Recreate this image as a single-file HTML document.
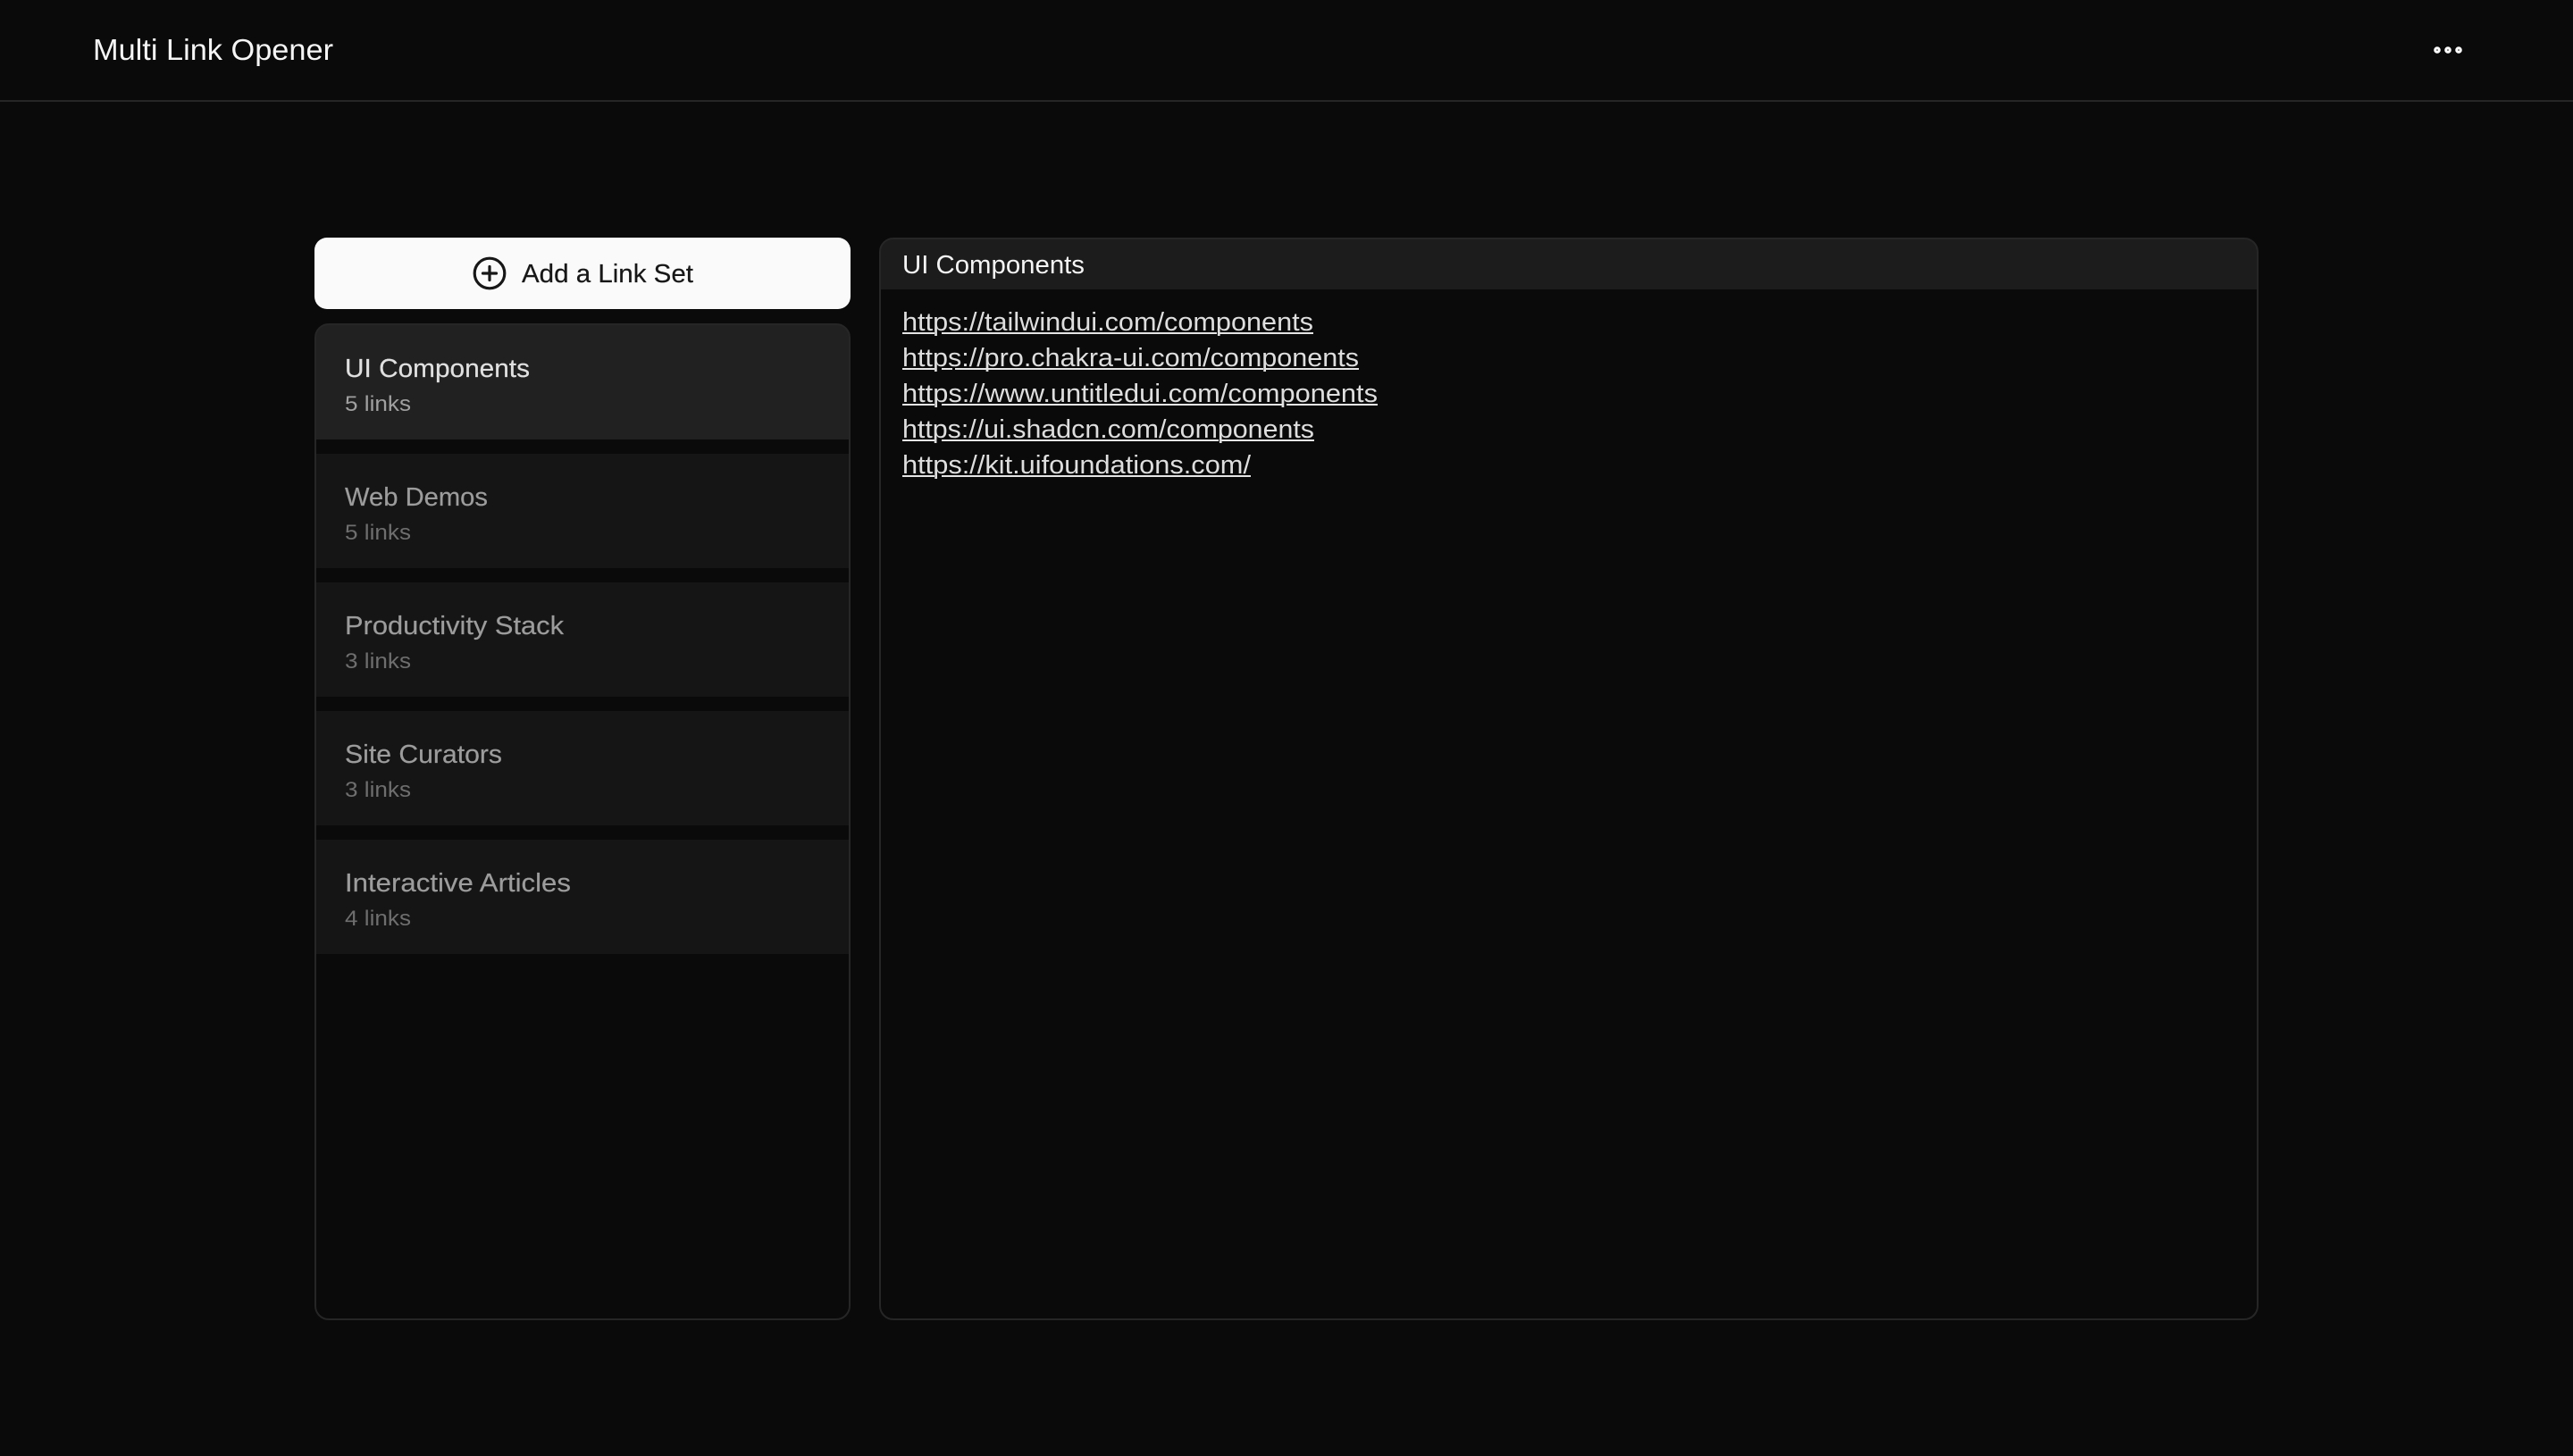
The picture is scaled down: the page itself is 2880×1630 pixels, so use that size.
<!DOCTYPE html>
<html lang="en">
<head>
<meta charset="utf-8">
<title>Multi Link Opener</title>
<style>
html,body{margin:0;padding:0;background:#0a0a0a;width:2880px;height:1630px;overflow:hidden}
svg{display:block}
text{font-family:"Liberation Sans",Arial,sans-serif;white-space:pre}
.t{font-size:29px}
.s{font-size:24.5px}
.m{stroke-width:.2px}
</style>
</head>
<body>
<svg xmlns="http://www.w3.org/2000/svg" width="2880" height="1630" viewBox="0 0 2880 1630">
<defs>
<clipPath id="l"><rect x="353" y="363" width="598" height="1114" rx="15"/></clipPath>
<clipPath id="r"><rect x="985" y="267" width="1542" height="1210" rx="15"/></clipPath>
</defs>
<rect width="2880" height="1630" fill="#0a0a0a"/>

<!-- header -->
<text x="104" y="67" font-size="33" fill="#f5f5f5" textLength="269" lengthAdjust="spacingAndGlyphs">Multi Link Opener</text>
<rect x="0" y="112" width="2880" height="2" fill="#262626"/>
<g fill="none" stroke="#fff" stroke-width="3"><circle cx="2728" cy="56" r="2.3"/><circle cx="2740" cy="56" r="2.3"/><circle cx="2752" cy="56" r="2.3"/></g>

<!-- add button -->
<rect x="352" y="266" width="600" height="80" rx="14" fill="#fafafa"/>
<g fill="none" stroke="#171717" stroke-width="3.2" stroke-linecap="round">
<circle cx="548" cy="306" r="16.8"/>
<path d="M548 298.5V313.5M540.5 306H555.5"/>
</g>
<text class="t m" x="584" y="316" fill="#171717" stroke="#171717" textLength="192" lengthAdjust="spacingAndGlyphs">Add a Link Set</text>

<!-- left panel -->
<g clip-path="url(#l)">
<rect x="352" y="362" width="600" height="130" fill="#212121"/>
<rect x="352" y="508" width="600" height="128" fill="#151515"/>
<rect x="352" y="652" width="600" height="128" fill="#151515"/>
<rect x="352" y="796" width="600" height="128" fill="#151515"/>
<rect x="352" y="940" width="600" height="128" fill="#151515"/>
</g>
<rect x="353" y="363" width="598" height="1114" rx="15" fill="none" stroke="#262626" stroke-width="2"/>

<text class="t m" x="386" y="422" fill="#e0e0e0" stroke="#e0e0e0" textLength="207" lengthAdjust="spacingAndGlyphs">UI Components</text>
<text class="s" x="386" y="460" fill="#a0a0a0" textLength="74" lengthAdjust="spacingAndGlyphs">5 links</text>

<text class="t m" x="386" y="566" fill="#9c9c9c" stroke="#9c9c9c" textLength="160" lengthAdjust="spacingAndGlyphs">Web Demos</text>
<text class="s" x="386" y="604" fill="#6e6e6e" textLength="74" lengthAdjust="spacingAndGlyphs">5 links</text>

<text class="t m" x="386" y="710" fill="#9c9c9c" stroke="#9c9c9c" textLength="245" lengthAdjust="spacingAndGlyphs">Productivity Stack</text>
<text class="s" x="386" y="748" fill="#6e6e6e" textLength="74" lengthAdjust="spacingAndGlyphs">3 links</text>

<text class="t m" x="386" y="854" fill="#9c9c9c" stroke="#9c9c9c" textLength="176" lengthAdjust="spacingAndGlyphs">Site Curators</text>
<text class="s" x="386" y="892" fill="#6e6e6e" textLength="74" lengthAdjust="spacingAndGlyphs">3 links</text>

<text class="t m" x="386" y="998" fill="#9c9c9c" stroke="#9c9c9c" textLength="253" lengthAdjust="spacingAndGlyphs">Interactive Articles</text>
<text class="s" x="386" y="1036" fill="#6e6e6e" textLength="74" lengthAdjust="spacingAndGlyphs">4 links</text>

<!-- right panel -->
<g clip-path="url(#r)"><rect x="984" y="266" width="1544" height="58" fill="#1c1c1c"/></g>
<rect x="985" y="267" width="1542" height="1210" rx="15" fill="none" stroke="#262626" stroke-width="2"/>
<text class="t" x="1010" y="306" fill="#f5f5f5" textLength="204" lengthAdjust="spacingAndGlyphs">UI Components</text>

<g class="t" fill="#dedede" font-size="29">
<text x="1010" y="370" textLength="460" lengthAdjust="spacingAndGlyphs">https://tailwindui.com/components</text>
<text x="1010" y="410" textLength="511" lengthAdjust="spacingAndGlyphs">https://pro.chakra-ui.com/components</text>
<text x="1010" y="450" textLength="532" lengthAdjust="spacingAndGlyphs">https://www.untitledui.com/components</text>
<text x="1010" y="490" textLength="461" lengthAdjust="spacingAndGlyphs">https://ui.shadcn.com/components</text>
<text x="1010" y="530" textLength="390" lengthAdjust="spacingAndGlyphs">https://kit.uifoundations.com/</text>
</g>
<g fill="#e5e5e5">
<rect x="1010" y="372" width="36" height="2"/><rect x="1054" y="372" width="308" height="2"/><rect x="1365" y="372" width="105" height="2"/>
<rect x="1010" y="412" width="36" height="2"/><rect x="1054" y="412" width="12" height="2"/><rect x="1069" y="412" width="345" height="2"/><rect x="1417" y="412" width="104" height="2"/>
<rect x="1010" y="452" width="36" height="2"/><rect x="1054" y="452" width="383" height="2"/><rect x="1440" y="452" width="102" height="2"/>
<rect x="1010" y="492" width="36" height="2"/><rect x="1054" y="492" width="310" height="2"/><rect x="1367" y="492" width="104" height="2"/>
<rect x="1010" y="532" width="36" height="2"/><rect x="1054" y="532" width="346" height="2"/>
</g>
</svg>
</body>
</html>
